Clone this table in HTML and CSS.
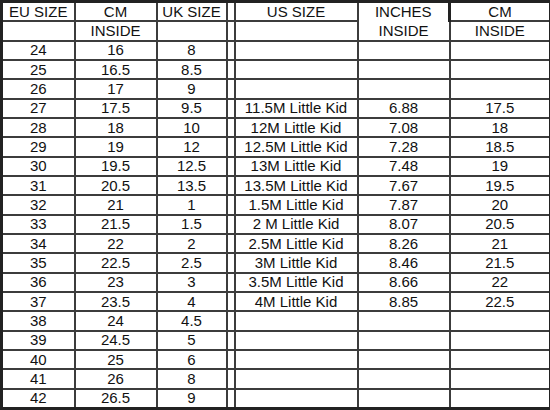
FILE: index.html
```html
<!DOCTYPE html>
<html>
<head>
<meta charset="utf-8">
<link rel="stylesheet" href="styles.css">
</head>
<body>
<table class="chart">
<colgroup>
<col class="c-eu"><col class="c-cm"><col class="c-uk"><col class="c-gap"><col class="c-us"><col class="c-in"><col class="c-cm2">
</colgroup>
<tbody>
<tr><td>EU SIZE</td><td>CM</td><td>UK SIZE</td><td></td><td>US SIZE</td><td class="strong-r no-b">INCHES</td><td>CM</td></tr>
<tr><td></td><td>INSIDE</td><td></td><td></td><td></td><td class="no-t">INSIDE</td><td>INSIDE</td></tr>
<tr><td>24</td><td>16</td><td>8</td><td></td><td></td><td></td><td></td></tr>
<tr><td>25</td><td>16.5</td><td>8.5</td><td></td><td></td><td></td><td></td></tr>
<tr><td>26</td><td>17</td><td>9</td><td></td><td></td><td></td><td></td></tr>
<tr><td>27</td><td>17.5</td><td>9.5</td><td></td><td>11.5M Little Kid</td><td>6.88</td><td>17.5</td></tr>
<tr><td>28</td><td>18</td><td>10</td><td></td><td>12M Little Kid</td><td>7.08</td><td>18</td></tr>
<tr><td>29</td><td>19</td><td>12</td><td></td><td>12.5M Little Kid</td><td>7.28</td><td>18.5</td></tr>
<tr><td>30</td><td>19.5</td><td>12.5</td><td></td><td>13M Little Kid</td><td>7.48</td><td>19</td></tr>
<tr><td>31</td><td>20.5</td><td>13.5</td><td></td><td>13.5M Little Kid</td><td>7.67</td><td>19.5</td></tr>
<tr><td>32</td><td>21</td><td>1</td><td></td><td>1.5M Little Kid</td><td>7.87</td><td>20</td></tr>
<tr><td>33</td><td>21.5</td><td>1.5</td><td></td><td>2 M Little Kid</td><td>8.07</td><td>20.5</td></tr>
<tr><td>34</td><td>22</td><td>2</td><td></td><td>2.5M Little Kid</td><td>8.26</td><td>21</td></tr>
<tr><td>35</td><td>22.5</td><td>2.5</td><td></td><td>3M Little Kid</td><td>8.46</td><td>21.5</td></tr>
<tr><td>36</td><td>23</td><td>3</td><td></td><td>3.5M Little Kid</td><td>8.66</td><td>22</td></tr>
<tr><td>37</td><td>23.5</td><td>4</td><td></td><td>4M Little Kid</td><td>8.85</td><td>22.5</td></tr>
<tr><td>38</td><td>24</td><td>4.5</td><td></td><td></td><td></td><td></td></tr>
<tr><td>39</td><td>24.5</td><td>5</td><td></td><td></td><td></td><td></td></tr>
<tr><td>40</td><td>25</td><td>6</td><td></td><td></td><td></td><td></td></tr>
<tr><td>41</td><td>26</td><td>8</td><td></td><td></td><td></td><td></td></tr>
<tr><td>42</td><td>26.5</td><td>9</td><td></td><td></td><td></td><td></td></tr>
</tbody>
</table>
</body>
</html>
```
FILE: styles.css
```css
html, body {
  margin: 0;
  padding: 0;
  background: #ffffff;
}
.chart {
  border-collapse: collapse;
  table-layout: fixed;
  width: 550px;
  height: 410px;
  font-family: "Liberation Sans", Arial, sans-serif;
  font-size: 15px;
  color: #111111;
  border: 3px solid #222222;
}
.c-eu { width: 73px; }
.c-cm { width: 82px; }
.c-uk { width: 70px; }
.c-gap { width: 8px; }
.c-us { width: 123px; }
.c-in { width: 92px; }
.c-cm2 { width: 101px; }
.chart td {
  border: 2px solid #3c3c3c;
  padding: 0;
  text-align: center;
  vertical-align: middle;
  line-height: 16px;
  white-space: nowrap;
  overflow: hidden;
}
.chart td.strong-r {
  border-right: 3px solid #222222;
}
.chart td.no-b {
  border-bottom: none;
}
.chart td.no-t {
  border-top: none;
}
```
